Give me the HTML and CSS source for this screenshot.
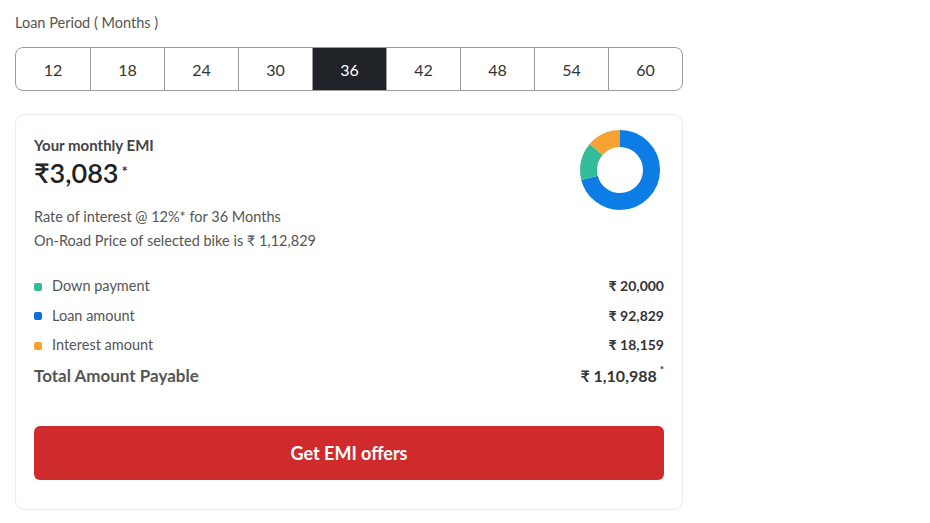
FILE: index.html
```html
<!DOCTYPE html>
<html>
<head>
<meta charset="utf-8">
<link rel="stylesheet" href="styles.css">
</head>
<body>
<div class="wrap">
  <div class="label">Loan Period ( Months )</div>
  <div class="periods">
    <div class="period">12</div>
    <div class="period">18</div>
    <div class="period">24</div>
    <div class="period">30</div>
    <div class="period active">36</div>
    <div class="period">42</div>
    <div class="period">48</div>
    <div class="period">54</div>
    <div class="period">60</div>
  </div>
  <div class="card">
    <div class="top">
      <div class="info">
        <div class="emi-title">Your monthly EMI</div>
        <div class="emi-amount">₹3,083<sup>*</sup></div>
        <div class="meta first">Rate of interest @ 12%* for 36 Months</div>
        <div class="meta">On-Road Price of selected bike is ₹ 1,12,829</div>
      </div>
      <svg class="donut" width="80" height="80" viewBox="0 0 80 80">
        <g transform="rotate(-90 40 40)">
          <circle cx="40" cy="40" r="31.5" fill="none" stroke="#0b7de4" stroke-width="17" stroke-dasharray="140.3 197.92" stroke-dashoffset="0"/>
          <circle cx="40" cy="40" r="31.5" fill="none" stroke="#33bb9a" stroke-width="17" stroke-dasharray="30.25 197.92" stroke-dashoffset="-140.3"/>
          <circle cx="40" cy="40" r="31.5" fill="none" stroke="#f7a133" stroke-width="17" stroke-dasharray="27.4 197.92" stroke-dashoffset="-170.55"/>
        </g>
      </svg>
    </div>
    <div class="rows">
      <div class="row"><span class="key"><i class="dot teal"></i>Down payment</span><span class="val">₹ 20,000</span></div>
      <div class="row"><span class="key"><i class="dot blue"></i>Loan amount</span><span class="val">₹ 92,829</span></div>
      <div class="row"><span class="key"><i class="dot orange"></i>Interest amount</span><span class="val">₹ 18,159</span></div>
      <div class="row total"><span class="key">Total Amount Payable</span><span class="val">₹ 1,10,988<sup>*</sup></span></div>
    </div>
    <button class="cta">Get EMI offers</button>
  </div>
</div>
</body>
</html>
```
FILE: styles.css
```css
html, body {
  margin: 0;
  padding: 0;
  background: #fff;
}
body {
  font-family: Lato, "Open Sans", "Liberation Sans", sans-serif;
  color: #333;
}
.wrap {
  width: 668px;
  padding: 14px 15px 0 15px;
}
.label {
  font-size: 14.5px;
  line-height: 17px;
  color: #555;
}
.periods {
  margin-top: 16px;
  display: grid;
  grid-template-columns: repeat(9, 1fr);
  border: 1px solid #9a9a9a;
  border-radius: 8px;
  overflow: hidden;
  height: 42px;
}
.period {
  display: flex;
  align-items: center;
  justify-content: center;
  font-size: 16px;
  color: #333;
  border-left: 1px solid #9a9a9a;
}
.period:first-child {
  border-left: none;
}
.period.active {
  background: #1f2226;
  color: #fff;
}
.card {
  margin-top: 23px;
  border: 1px solid #ececec;
  border-radius: 10px;
  padding: 20px 18px 29px 18px;
  box-shadow: 0 1px 2px rgba(0,0,0,0.03);
}
.top {
  display: flex;
  justify-content: space-between;
  align-items: flex-start;
}
.donut {
  margin-top: -5px;
  margin-right: 4px;
}
.emi-title {
  font-size: 15px;
  font-weight: 700;
  color: #444;
  line-height: 20px;
}
.emi-amount {
  font-size: 27px;
  font-weight: 600;
  color: #222;
  line-height: 30px;
  margin-top: 3px;
}
.emi-amount sup {
  font-size: 15px;
  vertical-align: top;
  position: relative;
  top: -2px;
  margin-left: 3px;
}
.meta {
  font-size: 14.5px;
  color: #555;
  line-height: 24px;
}
.meta.first {
  margin-top: 17px;
}
.rows {
  margin-top: 18px;
}
.row {
  display: flex;
  justify-content: space-between;
  align-items: center;
  height: 29.5px;
}
.key {
  display: flex;
  align-items: center;
  font-size: 14.5px;
  color: #555;
}
.dot {
  display: inline-block;
  width: 8px;
  height: 8px;
  border-radius: 2px;
  margin: 2px 10px 0 0;
}
.dot.teal { background: #33bb9a; }
.dot.blue { background: #0b6fdc; }
.dot.orange { background: #f7a133; }
.val {
  font-size: 14px;
  font-weight: 700;
  color: #333;
}
.row.total {
  height: 32px;
}
.row.total .key {
  font-size: 17px;
  font-weight: 700;
  color: #555;
}
.row.total .val {
  font-size: 16px;
}
.val sup {
  font-size: 10px;
  vertical-align: top;
  position: relative;
  top: -3px;
  margin-left: 3px;
}
.cta {
  display: block;
  width: 100%;
  margin-top: 34px;
  height: 54px;
  border: none;
  border-radius: 6px;
  background: #cf2b2c;
  color: #fff;
  font-family: Lato, "Open Sans", "Liberation Sans", sans-serif;
  font-size: 18px;
  font-weight: 700;
}
```
